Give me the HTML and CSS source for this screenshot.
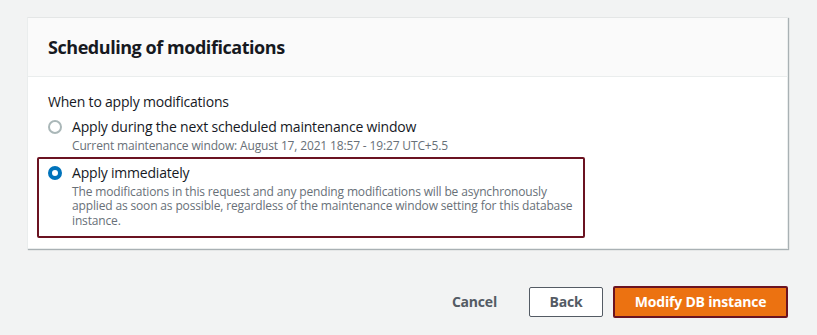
FILE: index.html
```html
<!DOCTYPE html>
<html lang="en">
<head>
<meta charset="utf-8">
<title>Scheduling of modifications</title>
<link rel="stylesheet" href="styles.css">
</head>
<body>
<div class="page">
  <section class="card">
    <header class="card-header">
      <h2 class="card-title">Scheduling of modifications</h2>
    </header>
    <div class="card-body">
      <div class="field-label">When to apply modifications</div>
      <div class="radio-group">
        <label class="option">
          <span class="radio"></span>
          <span class="option-text">
            <span class="option-label">Apply during the next scheduled maintenance window</span>
            <span class="option-desc">Current maintenance window: August 17, 2021 18:57 - 19:27 UTC+5.5</span>
          </span>
        </label>
        <label class="option option-selected">
          <span class="radio radio-checked"></span>
          <span class="option-text">
            <span class="option-label">Apply immediately</span>
            <span class="option-desc">The modifications in this request and any pending modifications will be asynchronously applied as soon as possible, regardless of the maintenance window setting for this database instance.</span>
          </span>
        </label>
      </div>
    </div>
  </section>
  <div class="actions">
    <button class="btn btn-link">Cancel</button>
    <button class="btn btn-normal">Back</button>
    <button class="btn btn-primary">Modify DB instance</button>
  </div>
</div>
</body>
</html>
```
FILE: styles.css
```css
* { box-sizing: border-box; }
html, body { margin: 0; padding: 0; }
body {
  background: #f2f3f3;
  font-family: "Open Sans", "Noto Sans", sans-serif;
  color: #16191f;
  width: 817px;
  height: 335px;
  overflow: hidden;
}
.page {
  padding: 17px 29px 0 27px;
}
.card {
  background: #ffffff;
  border: 1px solid #eaeded;
  border-top-color: #e4e6e6;
  box-shadow: 1px 1px 1px 0 rgba(0, 28, 36, 0.3);
}
.card-header {
  background: #fafafa;
  border-bottom: 1px solid #eaeded;
  height: 59px;
  display: flex;
  align-items: center;
  padding: 0 20px;
}
.card-title {
  margin: 0;
  font-size: 18px;
  font-weight: 700;
  line-height: 22px;
  letter-spacing: -0.45px;
}
.card-body {
  padding: 16px 20px 10px 20px;
}
.field-label {
  font-size: 14px;
  line-height: 18px;
  letter-spacing: -0.2px;
}
.radio-group {
  display: flex;
  flex-direction: column;
  margin-left: -11px;
}
.option {
  display: flex;
  align-items: flex-start;
  gap: 10px;
  padding: 4px 9px 1px 9px;
  border: 2px solid transparent;
  width: 548px;
}
.option-selected {
  border-color: #6b1321;
  border-radius: 2px;
  padding-bottom: 8px;
}
.radio {
  flex: none;
  width: 14px;
  height: 14px;
  margin-top: 3px;
  border-radius: 50%;
  border: 2px solid #aab7b8;
  background: #fff;
}
.radio-checked {
  border: 4px solid #0073bb;
}
.option-text {
  display: flex;
  flex-direction: column;
}
.option-label {
  font-size: 14px;
  line-height: 20px;
  color: #16191f;
  letter-spacing: -0.2px;
}
.option-desc {
  margin-top: 2px;
  font-size: 12px;
  line-height: 14.5px;
  color: #687078;
  letter-spacing: -0.15px;
}
.actions {
  display: flex;
  justify-content: flex-end;
  align-items: center;
  gap: 10px;
  margin-top: 37px;
}
.btn {
  font-family: "Open Sans", "Noto Sans", sans-serif;
  font-size: 14px;
  font-weight: 700;
  line-height: 20px;
  border-radius: 2px;
  cursor: pointer;
  letter-spacing: -0.2px;
}
.btn-link {
  background: transparent;
  border: 1px solid transparent;
  color: #545b64;
  padding: 4px 21px 4px 20px;
  margin-right: 0;
}
.btn-normal {
  background: #ffffff;
  border: 1px solid #545b64;
  color: #545b64;
  height: 30px;
  width: 74px;
  padding: 0;
}
.btn-primary {
  background: #ec7211;
  border: 2px solid #6b1321;
  color: #ffffff;
  height: 32px;
  width: 175px;
  padding: 0;
}
```
